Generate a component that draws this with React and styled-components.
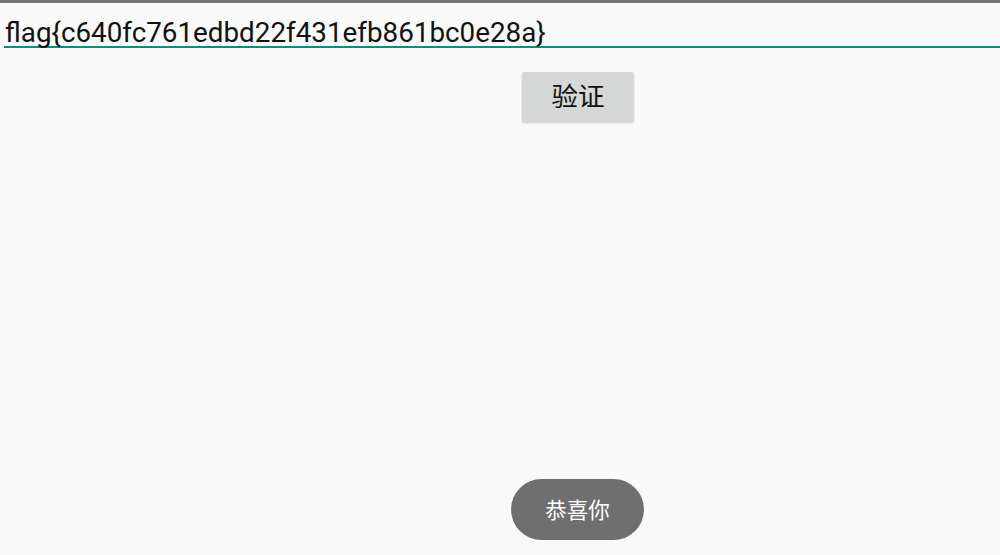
import React from "react";
import styled, { createGlobalStyle } from "styled-components";

const Global = createGlobalStyle`
  html, body { margin: 0; padding: 0; background: #fafafa; }
  body { font-family: Roboto, "Noto Sans CJK SC", sans-serif; }
`;

const Screen = styled.div`
  position: relative;
  width: 1000px;
  height: 555px;
  background: #fafafa;
  display: flex;
  flex-direction: column;
  overflow: hidden;
`;

const StatusEdge = styled.div`
  height: 3px;
  background: #757575;
  flex: none;
`;

const Field = styled.div`
  margin: 14px 0 0 4px;
  padding: 0 0 0 1px;
  height: 29px;
  border-bottom: 2px solid #128a7c;
  display: flex;
  align-items: flex-end;
  font-family: Roboto, sans-serif;
  font-size: 27.8px;
  line-height: 26px;
  letter-spacing: 0;
  color: #111;
  white-space: nowrap;
`;

const Row = styled.div`
  display: flex;
  justify-content: center;
  padding-top: 24px;
  padding-left: 156px;
`;

const Button = styled.button`
  width: 112px;
  height: 50px;
  border: none;
  border-radius: 2px;
  background: #d6d7d7;
  box-shadow: 0 1px 2px rgba(0, 0, 0, 0.18);
  font-family: "Noto Sans CJK SC", sans-serif;
  font-size: 26.5px;
  line-height: 46px;
  color: #111;
  padding: 0 0 4px;
  cursor: pointer;
`;

const Toast = styled.div`
  position: absolute;
  left: 511px;
  top: 479px;
  width: 133px;
  height: 61px;
  border-radius: 31px;
  background: #6f6f6f;
  color: #fff;
  display: flex;
  align-items: center;
  justify-content: center;
  font-family: "Noto Sans CJK SC", sans-serif;
  font-size: 21.5px;
  padding-bottom: 2px;
  box-sizing: border-box;
`;

export default function App() {
  return (
    <Screen>
      <Global />
      <StatusEdge />
      <Field>flag&#123;c640fc761edbd22f431efb861bc0e28a&#125;</Field>
      <Row>
        <Button>验证</Button>
      </Row>
      <Toast>恭喜你</Toast>
    </Screen>
  );
}
